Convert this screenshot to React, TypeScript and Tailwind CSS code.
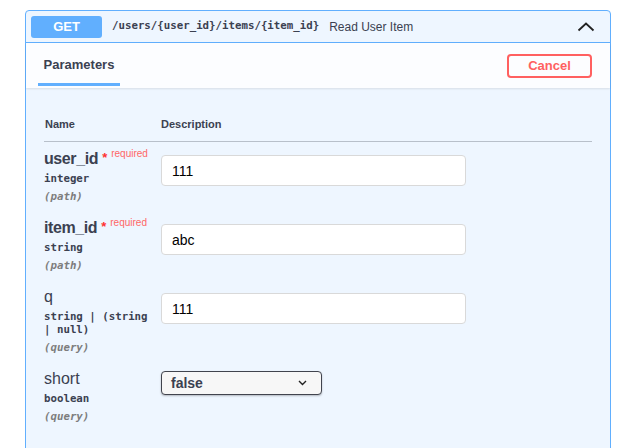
import React from 'react';

type Param = {
  name: string;
  required?: boolean;
  type: string[];
  location: string;
  value: string;
  kind: 'input' | 'select';
};

const params: Param[] = [
  { name: 'user_id', required: true, type: ['integer'], location: '(path)', value: '111', kind: 'input' },
  { name: 'item_id', required: true, type: ['string'], location: '(path)', value: 'abc', kind: 'input' },
  { name: 'q', type: ['string | (string', '| null)'], location: '(query)', value: '111', kind: 'input' },
  { name: 'short', type: ['boolean'], location: '(query)', value: 'false', kind: 'select' },
];

const sans = { fontFamily: '"Liberation Sans", Arial, sans-serif' };
const mono = { fontFamily: '"DejaVu Sans Mono", "Liberation Mono", monospace' };

function ParamRow({ p }: { p: Param }) {
  return (
    <div className="flex">
      <div className="w-[117px] pt-[9px] pb-[8px] shrink-0">
        <div className="flex items-start h-[16px] text-[#3b4151]">
          <span
            className={`text-[16px] leading-[16px] ${p.required ? 'font-bold tracking-[-0.4px]' : 'font-normal'}`}
          >
            {p.name}
          </span>
          {p.required && (
            <>
              <span className="ml-[4px] text-[13px] leading-[13px] font-bold text-[#ff3333]">*</span>
              <span className="ml-[4px] -mt-[2px] text-[10px] leading-[10px] text-[#ff6666]">required</span>
            </>
          )}
        </div>
        <div className="py-[5px] text-[10.75px] leading-[13px] font-bold text-[#3b4151]" style={mono}>
          {p.type.map((t) => (
            <div key={t}>{t}</div>
          ))}
        </div>
        <div className="text-[10.75px] leading-[13px] italic font-bold text-[#7d7d7d]" style={mono}>
          {p.location}
        </div>
      </div>
      {p.kind === 'input' ? (
        <div className="pt-[13px]">
          <input
            defaultValue={p.value}
            className="block w-[305px] h-[31px] bg-white border border-[#d9d9d9] rounded-[4px] pl-[10px] text-[14px] text-black outline-none"
            style={sans}
          />
        </div>
      ) : (
        <div className="pt-[9px]">
          <div className="flex items-center justify-between w-[161px] h-[24px] bg-[#f7f7f7] border border-[#41444e] rounded-[4px] shadow-[0_1px_2px_rgba(0,0,0,0.25)] pl-[9px] pr-[14px]">
            <span className="text-[14px] font-bold text-[#3b4151]">{p.value}</span>
            <svg width="9" height="6" viewBox="0 0 9 6" fill="none">
              <path d="M1 1l3.5 3.5L8 1" stroke="#222" strokeWidth="1.4" />
            </svg>
          </div>
        </div>
      )}
    </div>
  );
}

export default function App() {
  return (
    <div className="w-[634px] h-[448px] bg-white overflow-hidden pt-[10px]" style={sans}>
      <div className="ml-[25px] w-[586px] h-[460px] border border-[#61affe] rounded-t-[4px] bg-[#eef6ff]">
        {/* summary */}
        <div className="flex items-center h-[32px] px-[5px] border-b border-[#61affe]">
          <div className="flex items-center justify-center w-[71px] h-[22px] rounded-[3px] bg-[#61affe] text-white text-[13px] font-bold">
            GET
          </div>
          <span className="ml-[10px] text-[10.75px] font-bold text-[#3b4151]" style={mono}>
            /users/{'{user_id}'}/items/{'{item_id}'}
          </span>
          <span className="ml-[10px] text-[12px] text-[#3b4151]">Read User Item</span>
          <svg className="ml-auto mr-[10px]" width="18" height="10" viewBox="0 0 18 10" fill="none">
            <path d="M1.5 8.5L9 1.5l7.5 7" stroke="#222" strokeWidth="1.8" />
          </svg>
        </div>

        {/* section header */}
        <div className="flex justify-between h-[45px] pl-[12px] pr-[18px] bg-[#fcfdff] shadow-[0_1px_2px_rgba(0,0,0,0.1)]">
          <div className="w-[82px] pt-[13px]">
            <div className="text-center text-[13px] leading-[18px] font-bold text-[#3b4151]">Parameters</div>
            <div className="mt-[9px] h-[3px] bg-[#61affe]" />
          </div>
          <div className="pt-[10px]">
            <button className="w-[85px] h-[24px] border-2 border-[#ff6060] rounded-[4px] bg-transparent text-[13px] font-bold text-[#ff6060]">
              Cancel
            </button>
          </div>
        </div>

        {/* parameters table */}
        <div className="px-[18px]">
          <div className="flex pt-[29px] pb-[10px] border-b border-[#3b4151]/30 text-[11px] leading-[14px] font-bold text-[#3b4151]">
            <div className="w-[117px] pl-[1px]">Name</div>
            <div>Description</div>
          </div>
          {params.map((p) => (
            <ParamRow key={p.name} p={p} />
          ))}
        </div>
      </div>
    </div>
  );
}
